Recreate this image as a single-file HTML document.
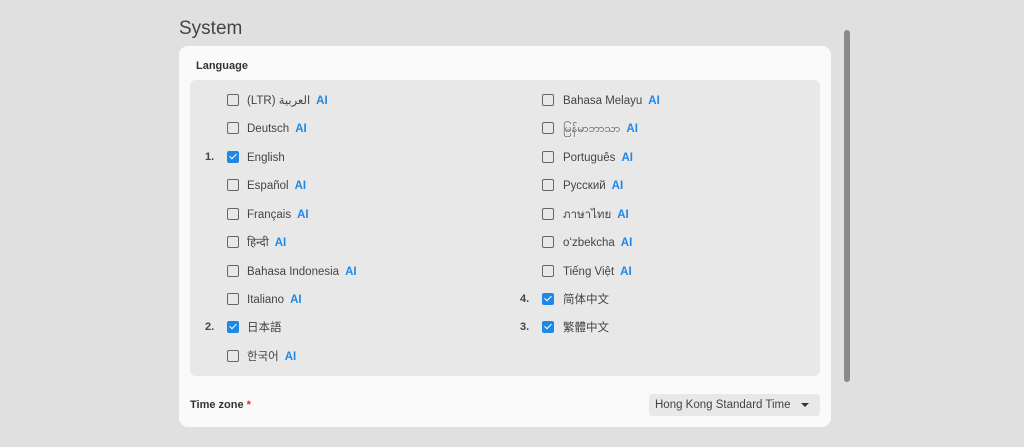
<!DOCTYPE html>
<html><head><meta charset="utf-8"><style>
*{margin:0;padding:0;box-sizing:border-box}
body{width:1024px;height:447px;background:#e0e0e0;font-family:"Liberation Sans","Noto Sans CJK SC",sans-serif;position:relative;overflow:hidden;color:#444}
.title{position:absolute;left:179px;top:18px;font-size:19px;color:#444}
.card{position:absolute;left:179px;top:46px;width:652px;height:381px;background:#fafafa;border-radius:9px}
.lab{position:absolute;left:196px;top:60px;font-size:11px;font-weight:bold;color:#333}
.box{position:absolute;left:190px;top:80px;width:630px;height:296px;background:#e8e8e8;border-radius:6px}
.r{position:absolute;font-size:11.5px;line-height:14px;height:14px;white-space:nowrap}
.cb{position:absolute;width:12px;height:12px;border:1.5px solid #666;border-radius:2px;background:transparent}
.cb.on{background:#1e88e5;border-color:#1e88e5}
.cb.on::after{content:"";position:absolute;left:3px;top:0px;width:3px;height:6px;border:solid #fff;border-width:0 1.5px 1.5px 0;transform:rotate(45deg)}
.ai{color:#1e88e5;font-weight:bold;margin-left:6px}
.n{position:absolute;font-size:11px;font-weight:bold;color:#444}
.sb{position:absolute;left:844px;top:30px;width:6px;height:352px;background:#8a8a8a;border-radius:3px}
.tz{position:absolute;left:190px;top:399px;font-size:11px;font-weight:bold;color:#333}
.sel{position:absolute;left:649px;top:394px;width:171px;height:22px;background:#e8e8e8;border-radius:3px;font-size:11.5px;line-height:23px;padding-left:6px;color:#444}
.sel::after{content:"";position:absolute;left:152px;top:9px;border:4px solid transparent;border-top:4px solid #333;border-bottom:0}
</style></head><body>
<div class="title">System</div>
<div class="card"></div>
<div class="lab">Language</div>
<div class="box"></div>

<div class="cb" style="left:227px;top:94px"></div><div class="r" style="left:247px;top:94px">(LTR) العربية<span class="ai">AI</span></div>
<div class="cb" style="left:227px;top:122px"></div><div class="r" style="left:247px;top:122px">Deutsch<span class="ai">AI</span></div>
<div class="n" style="left:205px;top:151px">1.</div><div class="cb on" style="left:227px;top:151px"></div><div class="r" style="left:247px;top:151px">English</div>
<div class="cb" style="left:227px;top:179px"></div><div class="r" style="left:247px;top:179px">Español<span class="ai">AI</span></div>
<div class="cb" style="left:227px;top:208px"></div><div class="r" style="left:247px;top:208px">Français<span class="ai">AI</span></div>
<div class="cb" style="left:227px;top:236px"></div><div class="r" style="left:247px;top:236px">हिन्दी<span class="ai">AI</span></div>
<div class="cb" style="left:227px;top:265px"></div><div class="r" style="left:247px;top:265px">Bahasa Indonesia<span class="ai">AI</span></div>
<div class="cb" style="left:227px;top:293px"></div><div class="r" style="left:247px;top:293px">Italiano<span class="ai">AI</span></div>
<div class="n" style="left:205px;top:321px">2.</div><div class="cb on" style="left:227px;top:321px"></div><div class="r" style="left:247px;top:321px">日本語</div>
<div class="cb" style="left:227px;top:350px"></div><div class="r" style="left:247px;top:350px">한국어<span class="ai">AI</span></div>

<div class="cb" style="left:542px;top:94px"></div><div class="r" style="left:563px;top:94px">Bahasa Melayu<span class="ai">AI</span></div>
<div class="cb" style="left:542px;top:122px"></div><div class="r" style="left:563px;top:122px">မြန်မာဘာသာ<span class="ai">AI</span></div>
<div class="cb" style="left:542px;top:151px"></div><div class="r" style="left:563px;top:151px">Português<span class="ai">AI</span></div>
<div class="cb" style="left:542px;top:179px"></div><div class="r" style="left:563px;top:179px">Русский<span class="ai">AI</span></div>
<div class="cb" style="left:542px;top:208px"></div><div class="r" style="left:563px;top:208px">ภาษาไทย<span class="ai">AI</span></div>
<div class="cb" style="left:542px;top:236px"></div><div class="r" style="left:563px;top:236px">oʻzbekcha<span class="ai">AI</span></div>
<div class="cb" style="left:542px;top:265px"></div><div class="r" style="left:563px;top:265px">Tiếng Việt<span class="ai">AI</span></div>
<div class="n" style="left:520px;top:293px">4.</div><div class="cb on" style="left:542px;top:293px"></div><div class="r" style="left:563px;top:293px">简体中文</div>
<div class="n" style="left:520px;top:321px">3.</div><div class="cb on" style="left:542px;top:321px"></div><div class="r" style="left:563px;top:321px">繁體中文</div>

<div class="tz">Time zone <span style="color:#d32f2f">*</span></div>
<div class="sel">Hong Kong Standard Time</div>
<div class="sb"></div>
</body></html>
